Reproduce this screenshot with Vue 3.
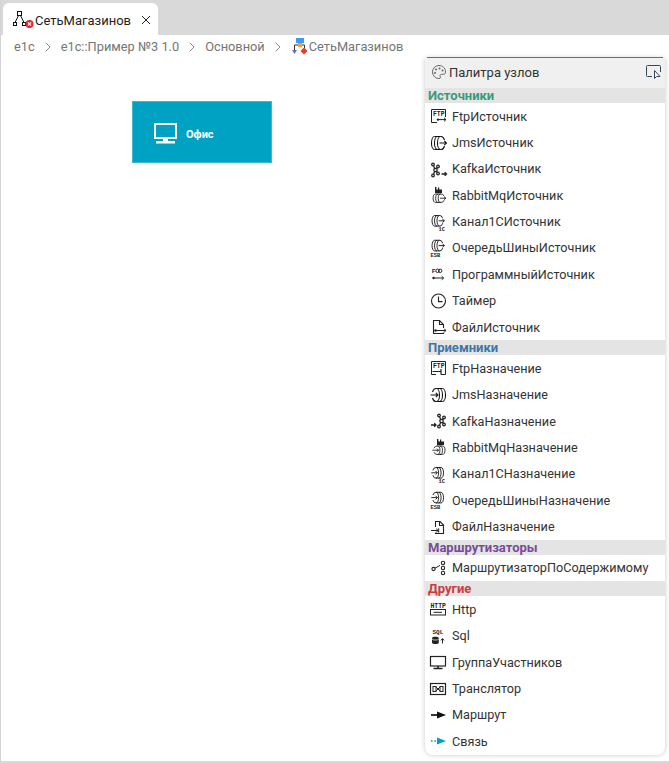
<script setup>
const rings = (x = 0, y = 0, sx = 1, sy = 1, arrowIn = false) => {
  const t = `transform="translate(${x} ${y}) scale(${sx} ${sy})"`
  if (arrowIn) {
    return `<g ${t} fill="none" stroke="#111" stroke-width="1.100"><path d="M7.500 3.500a3 6.500 0 0 1 0 13M10.500 3.500a3 6.500 0 0 1 0 13M13.500 3.500a3 6.500 0 0 1 0 13"/><path d="M7.500 3.500h6M7.500 16.500h6"/><path d="M7.500 3.500a4 6.500 0 0 0-4 3.500M7.500 16.500a4 6.500 0 0 1-4-3.500"/><path d="M1.500 10H9M6.800 7.800 9 10l-2.200 2.200"/></g>`
  }
  return `<g ${t} fill="none" stroke="#111" stroke-width="1.100"><path d="M5.500 3.500a3 6.500 0 0 0 0 13M8.500 3.500a3 6.500 0 0 0 0 13M11.500 3.500a3 6.500 0 0 0 0 13"/><path d="M5.500 3.500h6M5.500 16.500h6"/><path d="M11.500 3.500a4 6.500 0 0 1 4 3.500M11.500 16.500a4 6.500 0 0 0 4-3.500"/><path d="M10.500 10H17.500M15.300 7.800 17.500 10l-2.200 2.200"/></g>`
}
const label = (txt, x, y, size = 5.4) =>
  `<text x="${x}" y="${y}" font-family="Liberation Mono, monospace" font-weight="700" font-size="${size}" fill="#222">${txt}</text>`
const factory = `<path d="M6 2h1.400v2.600H9V2.400h1.200v2.200H13V8H6z" fill="#222"/>`
const kafka = `<g fill="none" stroke="#222" stroke-width="1.300"><circle cx="6.500" cy="10" r="1.700"/><circle cx="4" cy="4.500" r="1.300"/><circle cx="4" cy="15.500" r="1.300"/><circle cx="9" cy="6.500" r="1.300"/><circle cx="9" cy="13.500" r="1.300"/><path d="M4.600 6 5.700 8.400M4.600 14 5.700 11.600M8.200 7.600 7.600 8.600M8.200 12.400 7.600 11.400"/></g>`

const icons = {
  ftpIn: `<path d="M16.500 11V3.500h-14v13H8" fill="none" stroke="#222"/>${label('FTP', 4, 9.600, 6.400)}<circle cx="9" cy="13.600" r="1.200" fill="#222"/><path d="M9 13.600h8M15 11.800l2 1.800-2 1.800" fill="none" stroke="#222"/>`,
  jmsIn: rings(0, 0),
  kafkaIn: `<g transform="translate(0 1)">${kafka}</g><path d="M12.500 15h5M15.700 13.300l1.800 1.700-1.800 1.700" fill="none" stroke="#222" stroke-width="1.300"/>`,
  rabbitIn: `${factory}${rings(2, 6.700, 0.85, 0.65)}`,
  chanIn: `${rings(1, 0.600, 0.82, 0.82)}${label('1C', 9.500, 19)}`,
  esbIn: `${rings(1, -0.600, 0.82, 0.82)}${label('ESB', 1.500, 19)}`,
  progIn: `${label('F', 2.800, 8.800, 6.200)}<circle cx="8.500" cy="6.800" r="1.700" fill="none" stroke="#222"/><circle cx="11.200" cy="6.800" r="1.700" fill="none" stroke="#222"/><circle cx="4.500" cy="14" r="1.200" fill="#222"/><path d="M4.500 14h10M12.700 12.200l2 1.800-2 1.800" fill="none" stroke="#222"/>`,
  timer: `<circle cx="9.500" cy="10" r="7" fill="none" stroke="#222" stroke-width="1.100"/><path d="M9.500 5.600V10.600H13.500" fill="none" stroke="#222" stroke-width="1.100"/>`,
  fileIn: `<path d="M14.500 11V7.500L10.500 3.500H4.500v13h10v-1" fill="none" stroke="#222" stroke-width="1.100"/><path d="M10.500 3.500V7.500H14.500" fill="none" stroke="#222" stroke-width="1.100"/><circle cx="6.500" cy="13.500" r="1.300" fill="#222"/><path d="M6.500 13.500H17M15.200 11.900 17 13.500l-1.800 1.600" fill="none" stroke="#222"/>`,
  ftpOut: `<path d="M7 16.500H2.500v-13h14v13H12" fill="none" stroke="#222"/>${label('FTP', 4, 9.600, 6.400)}<path d="M3.500 13.500H11.500M12 11v5.500" fill="none" stroke="#222" stroke-width="1.200"/>`,
  jmsOut: rings(0, 0, 1, 1, true),
  kafkaOut: `<path d="M2 14h5M5.200 12.300 7 14l-1.800 1.700" fill="none" stroke="#222" stroke-width="1.300"/><g transform="translate(6 0)">${kafka}</g>`,
  rabbitOut: `<g transform="translate(2 0)">${factory}</g>${rings(2, 6.700, 0.85, 0.65, true)}`,
  chanOut: `${rings(1, 0.600, 0.82, 0.82, true)}${label('1C', 9.500, 19)}`,
  esbOut: `${rings(1, -0.600, 0.82, 0.82, true)}${label('ESB', 1.500, 19)}`,
  fileOut: `<path d="M6.500 10V4.500H11L14.500 8v8.500h-8V15.500" fill="none" stroke="#222" stroke-width="1.100"/><path d="M10.500 4.500V8.500H14.500" fill="none" stroke="#222" stroke-width="1.100"/><path d="M2 13.500H9M7.200 11.700 9.200 13.500l-2 1.800M9.700 11.300v4.400" fill="none" stroke="#222"/>`,
  router: `<circle cx="4.500" cy="11" r="1.600" fill="none" stroke="#222" stroke-width="1.100"/><path d="M6 10.200 11 7.400" stroke="#222"/><circle cx="14" cy="5" r="1.700" fill="none" stroke="#222" stroke-width="1.100"/><circle cx="14" cy="10" r="1.700" fill="none" stroke="#222" stroke-width="1.100"/><circle cx="14" cy="15" r="1.700" fill="none" stroke="#222" stroke-width="1.100"/>`,
  http: `${label('HTTP', 1.500, 8.500, 6.400)}<rect x="1.500" y="10.500" width="15" height="5.500" fill="none" stroke="#222"/><path d="M4.500 13.300h8.500" stroke="#222"/>`,
  sql: `${label('SQL', 3.500, 8, 6)}<path d="M3 12c0-1.800 6.800-1.800 6.800 0v4.500c0 2-6.800 2-6.800 0z" fill="#222"/><path d="M3 13c1 1.400 5.800 1.400 6.800 0" stroke="#fff" stroke-width=".7" fill="none"/><path d="M13.500 17.500V12.800M11.900 14.400l1.600-1.800 1.600 1.800" fill="none" stroke="#222"/>`,
  group: `<rect x="1.500" y="4.500" width="15" height="9.500" fill="none" stroke="#222" stroke-width="1.200"/><path d="M9 14v2.200M4.500 16.500h9" stroke="#222" stroke-width="1.600"/>`,
  translator: `<rect x="1.500" y="5.500" width="15" height="11" fill="none" stroke="#222" stroke-width="1.200"/><rect x="4" y="8.500" width="3" height="5" fill="none" stroke="#222"/><rect x="11" y="8.500" width="3" height="5" fill="none" stroke="#222"/><path d="M7 9l4 4M11 9l-4 4" stroke="#222"/>`,
  route: `<path d="M2 10h9" stroke="#111" stroke-width="1.700"/><path d="M8 6.500l9 3.500-9 3.500z" fill="#111"/>`,
  link: `<path d="M2 10h1.500M5.400 10h1.500M8 10h2.500" stroke="#00a2c4" stroke-width="1.600"/><path d="M8 6.500l9 3.500-9 3.500z" fill="#00a2c4"/>`
}

const sections = [
  { title: 'Источники', color: '#3d9a7a', items: [
    ['FtpИсточник', 'ftpIn'], ['JmsИсточник', 'jmsIn'], ['KafkaИсточник', 'kafkaIn'],
    ['RabbitMqИсточник', 'rabbitIn'], ['Канал1СИсточник', 'chanIn'], ['ОчередьШиныИсточник', 'esbIn'],
    ['ПрограммныйИсточник', 'progIn'], ['Таймер', 'timer'], ['ФайлИсточник', 'fileIn']
  ] },
  { title: 'Приемники', color: '#3f76a3', items: [
    ['FtpНазначение', 'ftpOut'], ['JmsНазначение', 'jmsOut'], ['KafkaНазначение', 'kafkaOut'],
    ['RabbitMqНазначение', 'rabbitOut'], ['Канал1СНазначение', 'chanOut'],
    ['ОчередьШиныНазначение', 'esbOut'], ['ФайлНазначение', 'fileOut']
  ] },
  { title: 'Маршрутизаторы', color: '#7a4b96', items: [['МаршрутизаторПоСодержимому', 'router']] },
  { title: 'Другие', color: '#cc3b42', items: [
    ['Http', 'http'], ['Sql', 'sql'], ['ГруппаУчастников', 'group'],
    ['Транслятор', 'translator'], ['Маршрут', 'route'], ['Связь', 'link']
  ] }
]

const crumbs = ['e1c', 'e1c::Пример №3 1.0', 'Основной']
</script>

<template>
  <div class="page">
    <div class="tabbar">
      <div class="tab">
        <svg class="tab-icon" width="22" height="18" viewBox="0 0 22 18">
          <rect x="4.500" y="0.500" width="4" height="4" fill="none" stroke="#111" />
          <rect x="0.500" y="11.500" width="3" height="3" fill="none" stroke="#111" />
          <rect x="9.500" y="11.500" width="3" height="3" fill="none" stroke="#111" />
          <path d="M5.500 4.500 2 11.500M7.500 4.500 11 11.500" fill="none" stroke="#111" />
          <circle cx="16.500" cy="13" r="4" fill="#e0262f" />
          <path d="M14.900 11.400l3.200 3.200M18.100 11.400l-3.200 3.200" stroke="#fff" stroke-width="1.200" />
        </svg>
        <span class="tab-title">СетьМагазинов</span>
        <svg class="tab-close" width="10" height="10" viewBox="0 0 10 10">
          <path d="M1 1l8 8M9 1l-8 8" stroke="#222" stroke-width="1" fill="none" />
        </svg>
      </div>
    </div>

    <div class="crumbs">
      <template v-for="c in crumbs" :key="c">
        <span>{{ c }}</span>
        <svg class="chev" width="6" height="10" viewBox="0 0 6 10">
          <path d="M0.700 0.700 5 5 0.700 9.300" fill="none" stroke="#8a8a8a" />
        </svg>
      </template>
      <span class="crumb-last">
        <svg width="16" height="18" viewBox="0 0 16 18">
          <rect x="4" y="0" width="8" height="5" fill="#3f9bf5" />
          <rect x="6" y="5" width="4" height="4" fill="#f2a12c" />
          <path d="M6 7H2.500v5M10 7h2.500v3" fill="none" stroke="#333" />
          <path d="M0 12h5L2.500 16z" fill="#6a6ab8" />
          <path d="M12 9.500l3.500 3.500-3.500 3.500L8.500 13z" fill="#e23b26" />
        </svg>
        <span class="crumb-name">СетьМагазинов</span>
      </span>
    </div>

    <div class="canvas">
      <div class="node">
        <svg width="23" height="21" viewBox="0 0 23 21">
          <rect x="1" y="1" width="21" height="14" fill="none" stroke="#fff" stroke-width="2" />
          <rect x="9" y="15" width="5" height="3" fill="#fff" />
          <rect x="2" y="18" width="19" height="2.500" fill="#fff" />
        </svg>
        <span class="node-label">Офис</span>
      </div>

      <aside class="palette">
        <header class="pal-head">
          <svg width="16" height="16" viewBox="0 0 16 16">
            <path d="M8 1.500a6.500 6.500 0 1 0 0 13c1.600 0 1.800-1.200 1.200-2-.7-1 .1-2.200 1.300-2.200h2c1.300 0 2-1 2-2.300C14.500 4 11.500 1.500 8 1.500z" fill="none" stroke="#666" />
            <circle cx="5" cy="5.500" r="1" fill="#666" />
            <circle cx="8.500" cy="4.500" r="1" fill="#666" />
            <circle cx="11.500" cy="6.500" r="1" fill="#666" />
            <circle cx="4" cy="9" r="1" fill="#666" />
          </svg>
          <span class="pal-title">Палитра узлов</span>
          <svg class="pal-pin" width="16" height="15" viewBox="0 0 16 15">
            <path d="M6 11.500H1.500a1 1 0 0 1-1-1V1.500a1 1 0 0 1 1-1h12a1 1 0 0 1 1 1V7" fill="none" stroke="#33475b" />
            <path d="M8.500 5.500v8l2-2h3.500z" fill="#fff" stroke="#33475b" />
          </svg>
        </header>
        <section v-for="s in sections" :key="s.title">
          <h3 class="sec-title" :style="{ color: s.color }">{{ s.title }}</h3>
          <div v-for="it in s.items" :key="it[0]" class="item">
            <svg class="ico" width="20" height="20" viewBox="0 0 20 20" v-html="icons[it[1]]"></svg>
            <span>{{ it[0] }}</span>
          </div>
        </section>
      </aside>
    </div>
  </div>
</template>

<style>
html, body { margin: 0; padding: 0; background: #fff; }
</style>

<style scoped>
.page {
  width: 669px;
  height: 763px;
  box-sizing: border-box;
  display: flex;
  flex-direction: column;
  overflow: hidden;
  background: #fff;
  border-left: 1px solid #d4d4d4;
  border-bottom: 2px solid #d9d9d9;
  font-family: Roboto, sans-serif;
  font-size: 13px;
  color: #333;
}
.tabbar {
  height: 35px;
  flex: none;
  box-sizing: border-box;
  padding: 3px 0 0 2px;
  background: #d9d9d9;
}
.tab {
  width: 155px;
  height: 32px;
  box-sizing: border-box;
  display: flex;
  align-items: center;
  padding: 2px 0 0 10px;
  background: #fff;
  border-radius: 6px 6px 0 0;
  color: #222;
}
.tab-icon { flex: none; }
.tab-title { font-size: 13px; }
.tab-close { margin-left: 10px; }
.crumbs {
  height: 23px;
  flex: none;
  display: flex;
  align-items: center;
  padding-left: 13px;
  color: #757575;
  font-size: 12.800px;
}
.chev { margin: 0 10px; flex: none; }
.crumb-last { display: flex; align-items: center; margin-left: 1px; }
.crumb-name { margin-left: 1px; }
.canvas { position: relative; flex: 1; }
.node {
  position: absolute;
  left: 131px;
  top: 43px;
  width: 140px;
  height: 62px;
  box-sizing: border-box;
  display: flex;
  align-items: center;
  gap: 9px;
  padding: 3px 0 0 21px;
  background: #00a2c4;
  border: 1px solid #3fb9d3;
  color: #fff;
  font-size: 11px;
  font-weight: 700;
}
.node-label { margin-top: 2px; }
.palette {
  position: absolute;
  left: 424px;
  top: 0;
  width: 240px;
  height: 697px;
  background: #fff;
  border-radius: 0 0 8px 8px;
  box-shadow: 0 0 5px rgba(0, 0, 0, 0.22);
}
.palette::before {
  content: "";
  position: absolute;
  left: 2px;
  right: 2px;
  top: -1px;
  height: 1px;
  background: #2f80c8;
}
.pal-head {
  height: 30px;
  box-sizing: border-box;
  display: flex;
  align-items: center;
  padding: 0 3px 2px 6px;
  background: #f0f0f0;
}
.pal-title { margin-left: 2px; font-size: 13px; }
.pal-pin { margin-left: auto; }
.sec-title {
  margin: 0;
  height: 15px;
  line-height: 15px;
  padding-left: 3px;
  background: #e4e4e4;
  font-size: 13px;
  font-weight: 700;
}
.item {
  height: 26.360px;
  display: flex;
  align-items: center;
  padding-left: 4px;
  font-size: 12.650px;
  color: #333;
}
.ico { flex: none; margin-right: 3px; }
</style>
